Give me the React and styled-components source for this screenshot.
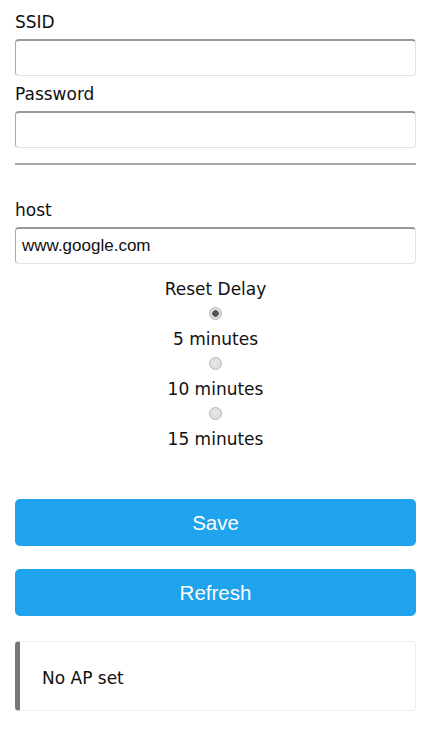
import React from "react";
import styled, { createGlobalStyle } from "styled-components";

const Global = createGlobalStyle`
  html, body { margin: 0; padding: 0; background: #fff; }
  body { font-family: "DejaVu Sans", Verdana, sans-serif; color: #111; }
`;

const Page = styled.div`
  width: 438px;
  box-sizing: border-box;
  padding: 12px 22px 20px 15px;
  display: flex;
  flex-direction: column;
`;

const Label = styled.label`
  display: block;
  font-size: 17px;
  line-height: 20px;
  height: 20px;
  margin-top: ${(p) => p.$top || 0}px;
  margin-bottom: 7px;
`;

const Input = styled.input`
  display: block;
  box-sizing: border-box;
  width: 100%;
  height: 37px;
  margin: 0;
  padding: 0 6px;
  font-family: "Liberation Sans", Arial, sans-serif;
  font-size: 17px;
  color: #111;
  background: #fff;
  border: 1px solid #e2e2e2;
  border-top: 2px solid #999;
  border-left-color: #aaa;
  border-radius: 4px;
  outline: none;
`;

const Rule = styled.hr`
  margin: 15px 0 0;
  border: 0;
  border-top: 2px solid #aaa;
  height: 0;
`;

const Group = styled.div`
  display: flex;
  flex-direction: column;
  align-items: center;
  margin-top: 15px;
`;

const Title = styled.div`
  font-size: 17px;
  line-height: 20px;
`;

const Radio = styled.span`
  display: block;
  box-sizing: border-box;
  width: 13px;
  height: 13px;
  border-radius: 50%;
  border: 1px solid #b5b5b5;
  background: radial-gradient(circle at 50% 50%, ${(p) =>
    p.$checked ? "#555 0 3px, #ddd 3.5px" : "#e6e6e6 0, #dcdcdc 100%"});
  margin: 8px 0 9px;
  margin-left: -1px;
`;

const Option = styled.div`
  font-size: 17px;
  line-height: 20px;
`;

const Button = styled.button`
  display: block;
  width: 100%;
  height: 47px;
  border: 0;
  border-radius: 5px;
  background: #1fa3ec;
  color: #fff;
  font-family: "Liberation Sans", Arial, sans-serif;
  font-size: 20.5px;
  margin-top: ${(p) => p.$top}px;
  padding: 0;
`;

const Message = styled.div`
  margin-top: 25px;
  height: 70px;
  box-sizing: border-box;
  border: 1px solid #eee;
  border-left: 5px solid #777;
  border-radius: 4px;
  display: flex;
  align-items: center;
  padding: 4px 0 0 22px;
  font-size: 17px;
`;

export default function App() {
  return (
    <>
      <Global />
      <Page>
        <Label>SSID</Label>
        <Input type="text" />
        <Label $top={8}>Password</Label>
        <Input type="password" />
        <Rule />
        <Label $top={35}>host</Label>
        <Input type="text" defaultValue="www.google.com" />
        <Group>
          <Title>Reset Delay</Title>
          <Radio $checked />
          <Option>5 minutes</Option>
          <Radio />
          <Option>10 minutes</Option>
          <Radio />
          <Option>15 minutes</Option>
        </Group>
        <Button $top={50}>Save</Button>
        <Button $top={23}>Refresh</Button>
        <Message>No AP set</Message>
      </Page>
    </>
  );
}
